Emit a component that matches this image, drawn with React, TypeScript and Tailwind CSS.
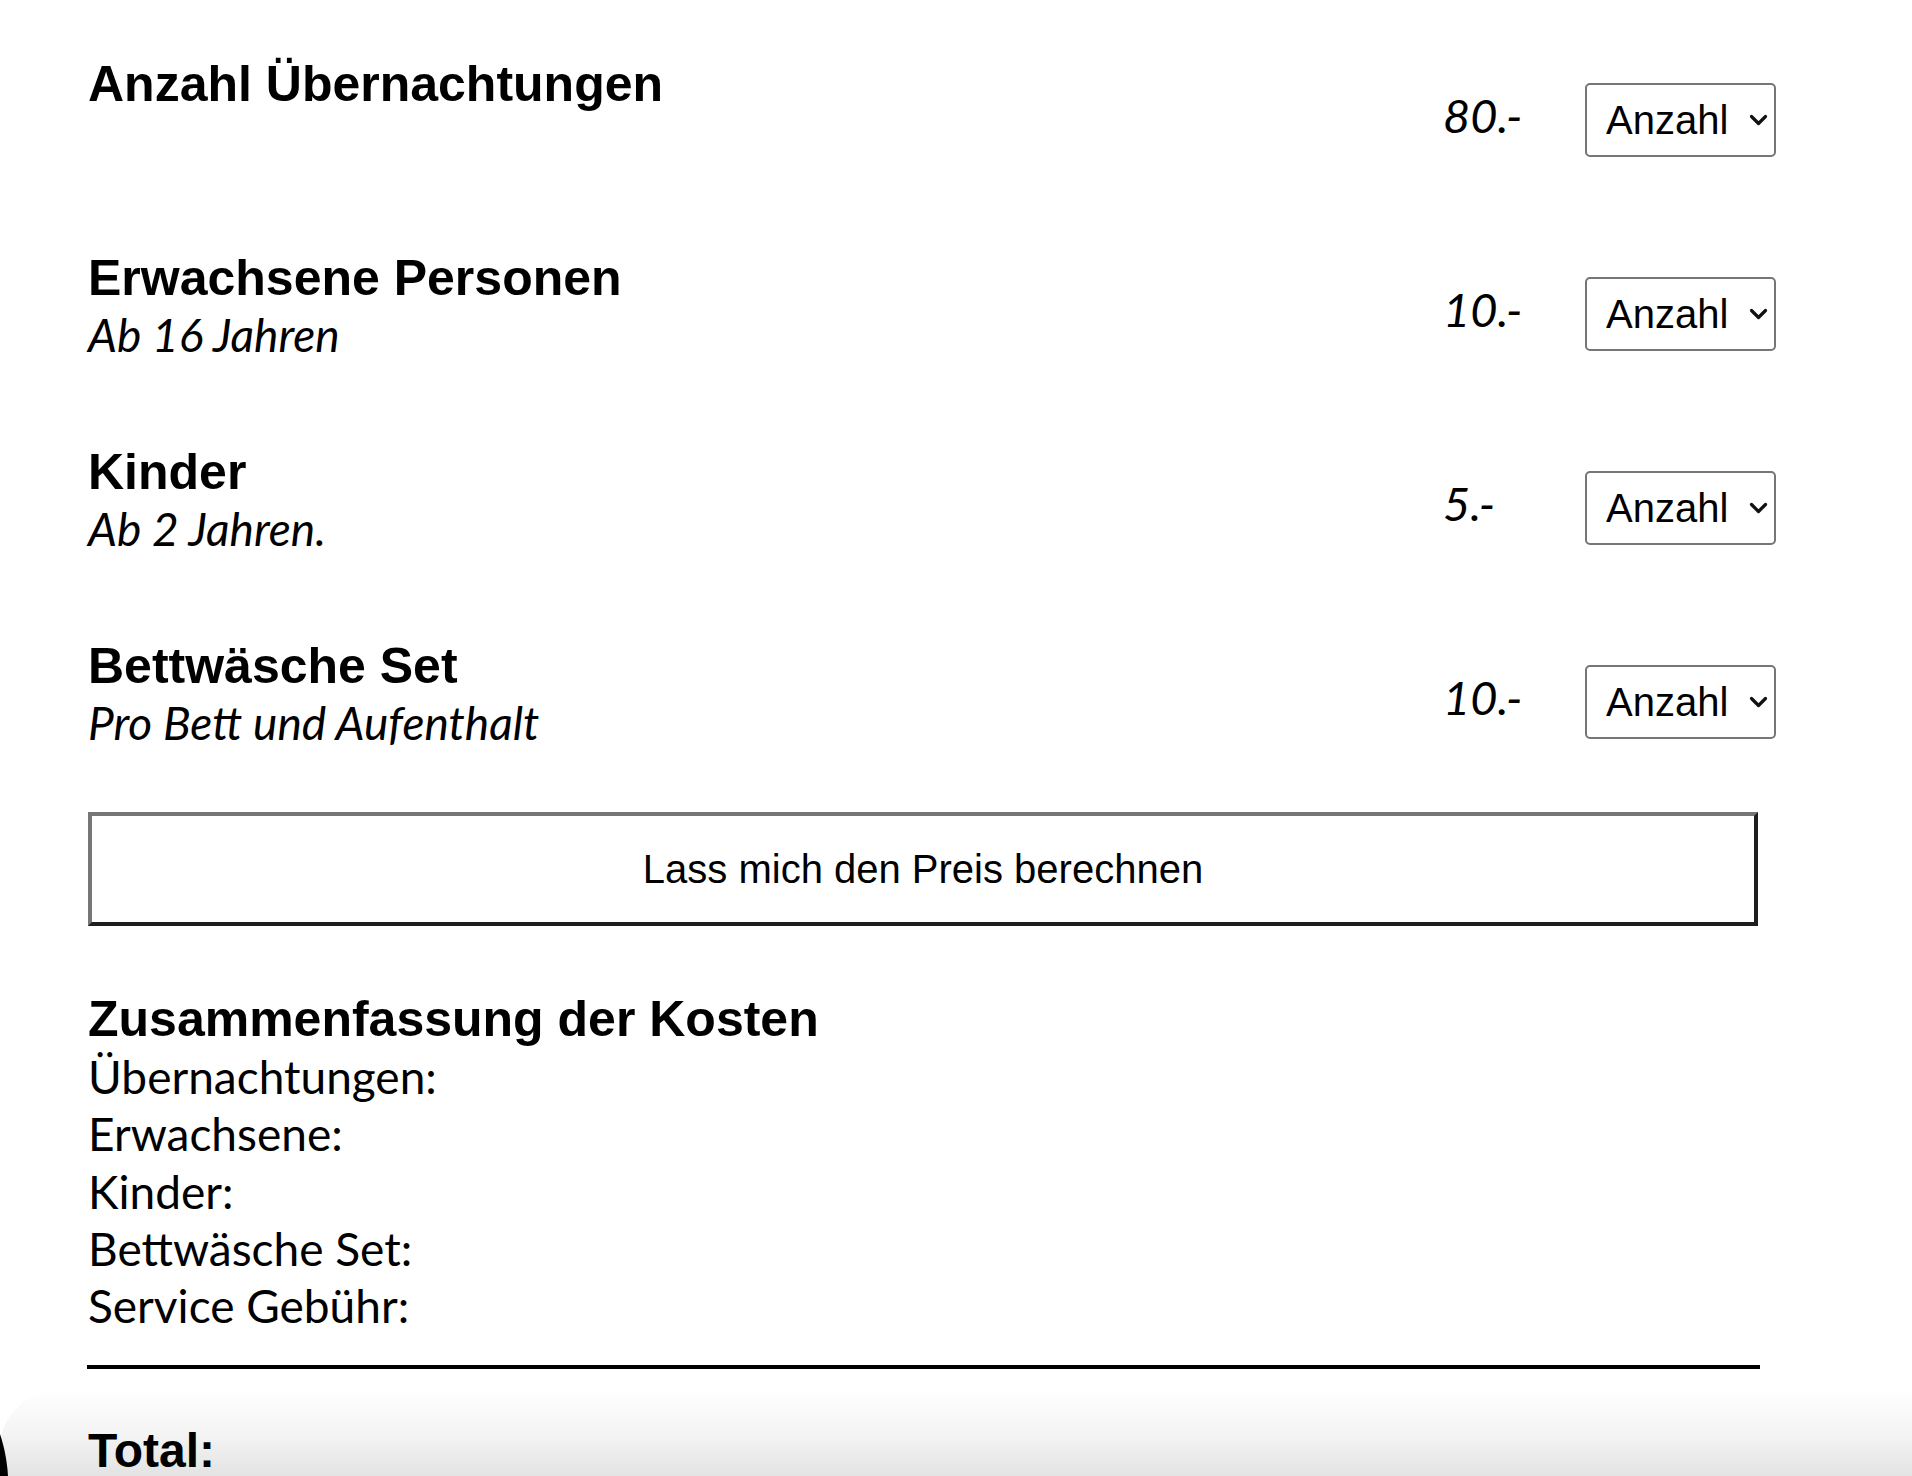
import { useState } from 'react';

const rows = [
    { title: 'Anzahl Übernachtungen', note: '', price: '80.-' },
    { title: 'Erwachsene Personen', note: 'Ab 16 Jahren', price: '10.-' },
    { title: 'Kinder', note: 'Ab 2 Jahren.', price: '5.-' },
    { title: 'Bettwäsche Set', note: 'Pro Bett und Aufenthalt', price: '10.-' },
];

const summary = ['Übernachtungen:', 'Erwachsene:', 'Kinder:', 'Bettwäsche Set:', 'Service Gebühr:'];

function CountSelect() {
    const [value, setValue] = useState('');

    return (
        <div className="relative mt-[28px] w-[191px] h-[74px]">
            <select
                value={value}
                onChange={(e) => setValue(e.target.value)}
                className="appearance-none w-full h-full bg-white border-2 border-[#767676] rounded-[5px] pl-[19px] pr-[36px] text-[40px] leading-none text-black font-['Liberation_Sans',Arial,sans-serif] outline-none"
            >
                <option value="">Anzahl</option>
                {[1, 2, 3, 4, 5, 6, 7, 8].map((n) => (
                    <option key={n} value={n}>
                        {n}
                    </option>
                ))}
            </select>
            {/* Chevron */}
            <svg
                className="pointer-events-none absolute right-[8px] top-1/2 -translate-y-1/2"
                width="19"
                height="12"
                viewBox="0 0 19 12"
                fill="none"
            >
                <polyline points="2.5,2.5 9.5,9.5 16.5,2.5" stroke="#111" strokeWidth="3.2" strokeLinecap="round" strokeLinejoin="round" />
            </svg>
        </div>
    );
}

export default function App() {
    return (
        <div className="relative h-[1476px] overflow-hidden bg-white text-black">
            {/* Window edge at the bottom of the capture */}
            <div className="pointer-events-none absolute left-0 right-0 bottom-0 h-[84px] rounded-tl-[56px] bg-gradient-to-b from-[#fefefe] via-[#f4f4f4] to-[#e3e3e3]" />
            <svg className="pointer-events-none absolute left-0 bottom-0" width="10" height="42" viewBox="0 0 10 42">
                <path d="M0 0 C4 12 7 26 8 42 L0 42 Z" fill="#000" />
            </svg>

            <div className="relative pl-[88px] pt-[55px]">
                {/* Price rows */}
                <div className="flex flex-col gap-[74px]">
                    {rows.map((row) => (
                        <div key={row.title} className="flex items-start h-[120px]">
                            <div className="w-[1355px]">
                                <h3 className="text-[50px] leading-[58px] font-bold font-['Liberation_Sans',Arial,sans-serif]">
                                    {row.title}
                                </h3>
                                {row.note && (
                                    <p className="text-[46px] leading-[56px] italic font-['Lato','Open_Sans',sans-serif]">
                                        {row.note}
                                    </p>
                                )}
                            </div>
                            <div className="w-[142px] mt-[31px] text-[47px] leading-[58px] italic font-['Lato','Open_Sans',sans-serif]">
                                {row.price}
                            </div>
                            <CountSelect />
                        </div>
                    ))}
                </div>

                {/* Calculate button */}
                <button className="mt-[55px] w-[1670px] h-[114px] bg-white border-[4px] border-t-[#767676] border-l-[#767676] border-b-[#1e1e1e] border-r-[#1e1e1e] text-[40px] font-['Liberation_Sans',Arial,sans-serif] text-black">
                    Lass mich den Preis berechnen
                </button>

                {/* Summary */}
                <h3 className="mt-[64px] text-[50px] leading-[58px] font-bold font-['Liberation_Sans',Arial,sans-serif]">
                    Zusammenfassung der Kosten
                </h3>
                <div className="text-[46px] leading-[57.3px] font-['Lato','Open_Sans',sans-serif]">
                    {summary.map((s) => (
                        <div key={s}>{s}</div>
                    ))}
                </div>

                <div className="mt-[31px] -ml-px w-[1673px] h-[4px] bg-black" />

                <h3 className="mt-[53px] text-[48px] leading-[58px] font-bold font-['Liberation_Sans',Arial,sans-serif]">
                    Total:
                </h3>
            </div>
        </div>
    );
}
